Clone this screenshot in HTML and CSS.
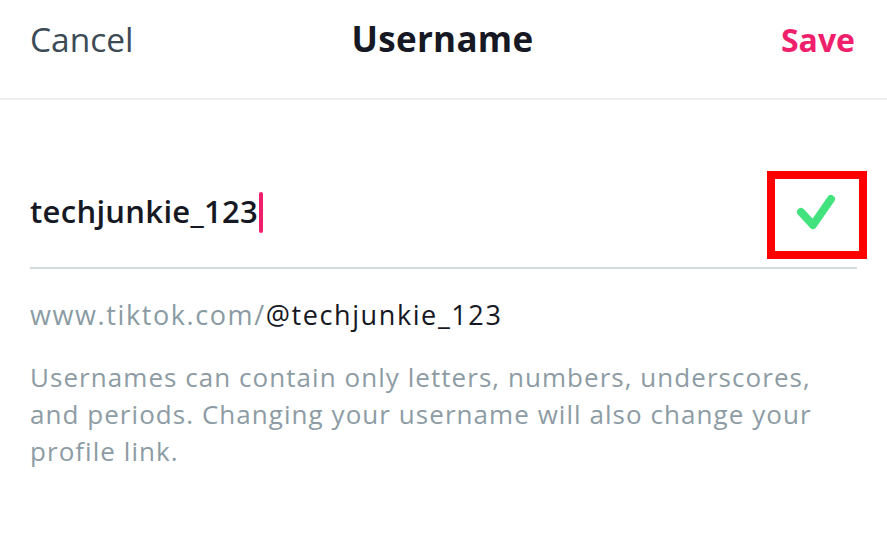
FILE: index.html
```html
<!DOCTYPE html>
<html>
<head>
<meta charset="utf-8">
<link rel="stylesheet" href="styles.css">
</head>
<body>
<header class="topbar">
  <span class="cancel">Cancel</span>
  <span class="title">Username</span>
  <span class="save">Save</span>
</header>
<main class="content">
  <div class="field">
    <span class="value">techjunkie_123</span><span class="caret"></span>
    <span class="check-wrap">
      <svg class="check" width="40" height="36" viewBox="0 0 40 36"><path d="M5 18 L17 31 L35 5" fill="none" stroke="#42e27e" stroke-width="8" stroke-linecap="round" stroke-linejoin="round"/></svg>
      <span class="highlight"></span>
    </span>
  </div>
  <p class="url"><span class="url-base">www.tiktok.com/</span>@techjunkie_123</p>
  <p class="hint">Usernames can contain only letters, numbers, underscores, and periods. Changing your username will also change your profile link.</p>
</main>
</body>
</html>
```
FILE: styles.css
```css
html, body {
  margin: 0;
  padding: 0;
  background: #ffffff;
  font-family: "Open Sans", Lato, sans-serif;
}
.topbar {
  height: 100px;
  box-sizing: border-box;
  border-bottom: 2px solid #eceeef;
  display: grid;
  grid-template-columns: 1fr auto 1fr;
  align-items: baseline;
  padding: 19px 32px 0 30px;
}
.cancel {
  justify-self: start;
  font-size: 33.5px;
  line-height: 40px;
  color: #3b4a55;
}
.title {
  font-size: 35px;
  line-height: 40px;
  font-weight: 700;
  letter-spacing: 0.3px;
  color: #161823;
}
.save {
  justify-self: end;
  font-size: 32px;
  line-height: 40px;
  font-weight: 700;
  color: #ef1f6c;
}
.content {
  padding: 0 30px;
}
.field {
  margin-top: 71px;
  height: 98px;
  box-sizing: border-box;
  border-bottom: 2px solid #d3d8da;
  display: flex;
  align-items: flex-start;
}
.value {
  margin-top: 20px;
  font-size: 31px;
  line-height: 40px;
  font-weight: 600;
  letter-spacing: 0.3px;
  color: #161823;
}
.caret {
  margin-top: 21px;
  margin-left: 1px;
  width: 4px;
  height: 41px;
  border-radius: 2px;
  background: #ef1f6c;
}
.check-wrap {
  margin-left: auto;
  margin-top: 23px;
  margin-right: 21px;
  position: relative;
  display: flex;
}
.highlight {
  position: absolute;
  left: -29px;
  top: -23px;
  width: 100px;
  height: 88px;
  border: 8px solid #ff0000;
  box-sizing: border-box;
}
.url {
  margin: 29px 0 0;
  font-size: 27px;
  line-height: 34px;
  letter-spacing: 1.6px;
  color: #161823;
}
.url-base {
  color: #8a9ba3;
}
.hint {
  margin: 27px 0 0;
  font-size: 26px;
  line-height: 37px;
  letter-spacing: 1.05px;
  color: #8d9ca4;
}
```
